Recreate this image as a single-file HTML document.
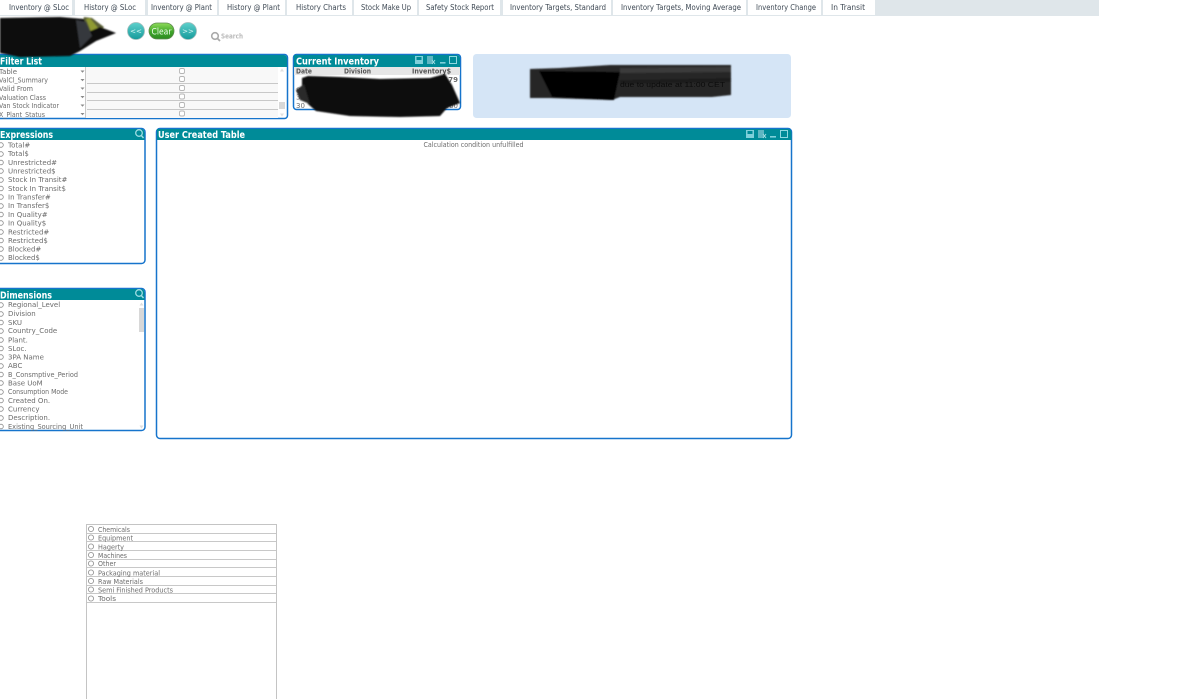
<!DOCTYPE html>
<html lang="en">
<head>
<meta charset="utf-8">
<title>Inventory</title>
<style>
html,body{margin:0;padding:0;background:#fff;width:1193px;height:699px;overflow:hidden}
svg{display:block;font-family:"DejaVu Sans","Liberation Sans",sans-serif}
.tab{font-size:7.5px;fill:#3f4a55}
.li{font-size:7px;fill:#6c6c6c}
.ti{font-size:10px;font-weight:bold;fill:#fff}
.pn{fill:#fff;stroke:#1674cc;stroke-width:1.5}
.hd{fill:#008b98}
.ln{stroke:#c8c8c8;stroke-width:1}
.rd{fill:#fff;stroke:#8a8a8a;stroke-width:.8}
.ic{fill:#7fd0da}
.t{filter:url(#s)}
</style>
</head>
<body>
<svg width="1193" height="699" viewBox="0 0 1193 699" xmlns="http://www.w3.org/2000/svg">
<defs>
<filter id="s" x="-5%" y="-5%" width="110%" height="110%"><feGaussianBlur stdDeviation="0.35"/></filter>
<filter id="b" x="-10%" y="-10%" width="120%" height="120%"><feGaussianBlur stdDeviation="0.8"/></filter>
<linearGradient id="g" x1="0" y1="0" x2="0" y2="1"><stop offset="0" stop-color="#8fdc5a"/><stop offset=".55" stop-color="#3fa52a"/><stop offset="1" stop-color="#2b8a20"/></linearGradient>
<linearGradient id="c" x1="0" y1="0" x2="0" y2="1"><stop offset="0" stop-color="#5fd0cc"/><stop offset="1" stop-color="#159a9a"/></linearGradient>
</defs>

<!-- Tab strip -->
<rect x="0" y="0" width="1099" height="16" fill="#dfe6ea"/>
<g fill="#fff">
<rect x="-1" y="0" width="73" height="15"/><rect x="75" y="0" width="70" height="15"/><rect x="148" y="0" width="69" height="15"/><rect x="219" y="0" width="66" height="15"/><rect x="287" y="0" width="65" height="15"/><rect x="354" y="0" width="63" height="15"/><rect x="419" y="0" width="81" height="15"/><rect x="503" y="0" width="108" height="15"/><rect x="613" y="0" width="133" height="15"/><rect x="748" y="0" width="73" height="15"/><rect x="823" y="0" width="52" height="15"/>
</g>
<g class="tab t">
<text x="9" y="10" textLength="60" lengthAdjust="spacingAndGlyphs">Inventory @ SLoc</text>
<text x="84" y="10" textLength="52" lengthAdjust="spacingAndGlyphs">History @ SLoc</text>
<text x="151" y="10" textLength="61" lengthAdjust="spacingAndGlyphs">Inventory @ Plant</text>
<text x="227" y="10" textLength="53" lengthAdjust="spacingAndGlyphs">History @ Plant</text>
<text x="296" y="10" textLength="50" lengthAdjust="spacingAndGlyphs">History Charts</text>
<text x="361" y="10" textLength="50" lengthAdjust="spacingAndGlyphs">Stock Make Up</text>
<text x="426" y="10" textLength="68" lengthAdjust="spacingAndGlyphs">Safety Stock Report</text>
<text x="510" y="10" textLength="96" lengthAdjust="spacingAndGlyphs">Inventory Targets, Standard</text>
<text x="621" y="10" textLength="120" lengthAdjust="spacingAndGlyphs">Inventory Targets, Moving Average</text>
<text x="756" y="10" textLength="60" lengthAdjust="spacingAndGlyphs">Inventory Change</text>
<text x="831" y="10" textLength="34" lengthAdjust="spacingAndGlyphs">In Transit</text>
</g>

<!-- Buttons -->
<circle cx="136" cy="31" r="8.5" fill="url(#c)" stroke="#9fbcbc" stroke-width=".8"/>
<text class="t" x="136" y="33.5" font-size="7" fill="#d8f6f4" text-anchor="middle">&lt;&lt;</text>
<rect x="149" y="23" width="25" height="16" rx="8" fill="url(#g)" stroke="#5f8a50" stroke-width=".8"/>
<text class="t" x="161.5" y="34.5" font-size="9" fill="#f0fff0" text-anchor="middle" textLength="20" lengthAdjust="spacingAndGlyphs">Clear</text>
<circle cx="188" cy="31" r="8.5" fill="url(#c)" stroke="#9fbcbc" stroke-width=".8"/>
<text class="t" x="188" y="33.5" font-size="7" fill="#d8f6f4" text-anchor="middle">&gt;&gt;</text>
<circle cx="215" cy="36" r="3.3" fill="none" stroke="#aaa" stroke-width="1.6"/>
<path d="M217.500 38.500L220 41" stroke="#aaa" stroke-width="1.8"/>
<text class="t" x="221" y="38.500" font-size="7" font-weight="bold" fill="#bbb" textLength="22" lengthAdjust="spacingAndGlyphs">Search</text>

<!-- Filter List -->
<rect class="pn" x="-4" y="54.500" width="291.500" height="64" rx="3"/>
<path class="hd" d="M-4 55H284a3 3 0 0 1 3 3V67H-4Z"/>
<text class="ti t" x="0" y="64.500" textLength="42" lengthAdjust="spacingAndGlyphs">Filter List</text>
<rect x="85" y="67" width="193" height="51" fill="#f8f8f8"/>
<path class="ln" d="M85.500 67V118M87 83.500H278M87 92.500H278M87 100.500H278M87 109.500H278"/>
<g class="li t" fill="#888">
<text x="-1" y="74" textLength="18" lengthAdjust="spacingAndGlyphs">Table</text>
<text x="-1" y="82.500" textLength="49" lengthAdjust="spacingAndGlyphs">ValCl_Summary</text>
<text x="-1" y="91" textLength="34" lengthAdjust="spacingAndGlyphs">Valid From</text>
<text x="-1" y="100" textLength="47" lengthAdjust="spacingAndGlyphs">Valuation Class</text>
<text x="-1" y="108" textLength="60" lengthAdjust="spacingAndGlyphs">Van Stock Indicator</text>
<text x="-1" y="117" textLength="46" lengthAdjust="spacingAndGlyphs">X_Plant_Status</text>
</g>
<g fill="#8a8a8a">
<path d="M80.500 70.500h4l-2 2.200zM80.500 79h4l-2 2.200zM80.500 87.500h4l-2 2.200zM80.500 96h4l-2 2.200zM80.500 104.500h4l-2 2.200zM80.500 113h4l-2 2.200z"/>
</g>
<g fill="#fff" stroke="#b5b5b5" stroke-width=".9">
<rect x="179.500" y="68.500" width="5" height="5" rx="1.500"/><rect x="179.500" y="76.500" width="5" height="5" rx="1.500"/><rect x="179.500" y="85.500" width="5" height="5" rx="1.500"/><rect x="179.500" y="94" width="5" height="5" rx="1.500"/><rect x="179.500" y="102.500" width="5" height="5" rx="1.500"/><rect x="179.500" y="111" width="5" height="5" rx="1.500"/>
</g>
<rect x="279" y="102" width="6" height="7" fill="#d8d8d8"/>
<path d="M282 68.500l-2 3h4zM282 116.500l-2-3h4z" fill="#e0e0e0"/>

<!-- Top-left scribble (over the panel edge) -->
<g filter="url(#b)">
<polygon points="84,17 92,18 104,27 86,46 76,50" fill="#5c6038"/>
<polygon points="86,19 90,18 98,28 92,34" fill="#8f9a30"/>
<polygon points="0,18 60,17 84,19 88,32 100,27 116,33 96,41 80,51 70,56 20,57 0,53" fill="#0c0c0c"/>
<polygon points="76,20 86,22 92,36 80,48" fill="#34383c"/>
</g>

<!-- Current Inventory -->
<rect class="pn" x="293.500" y="54.500" width="167" height="55" rx="3"/>
<path class="hd" d="M294 55H457a3 3 0 0 1 3 3V67H294Z"/>
<text class="ti t" x="296" y="64.500" textLength="83" lengthAdjust="spacingAndGlyphs">Current Inventory</text>
<rect x="415" y="56" width="8" height="8" class="ic"/><rect x="416.500" y="57" width="5" height="3" fill="#008b98"/>
<rect x="427" y="56" width="6" height="8" fill="#5fb6c2"/><path d="M432 60l3 4M435 60l-3 4" stroke="#9fdce2"/>
<rect x="440" y="62" width="5.500" height="1.600" class="ic"/>
<rect x="449.500" y="56.500" width="7" height="7" fill="none" stroke="#8fd8e0"/>
<rect x="294" y="67" width="166" height="8" fill="#e6e6e6"/>
<g class="t" font-size="7" font-weight="bold" fill="#555">
<text x="296" y="73.500" textLength="16" lengthAdjust="spacingAndGlyphs">Date</text>
<text x="344" y="73.500" textLength="27" lengthAdjust="spacingAndGlyphs">Division</text>
<text x="412" y="73.500" textLength="39" lengthAdjust="spacingAndGlyphs">Inventory$</text>
</g>
<g class="li t" fill="#666">
<text x="296" y="92.500">80</text>
<text x="296" y="99.500">30</text>
<text x="296" y="108">30</text>
<text x="458" y="108" text-anchor="end">060</text>
<text x="458" y="82" text-anchor="end" font-weight="bold">179</text>
</g>
<g filter="url(#b)">
<polygon points="302,78 308,76 340,77 380,79 430,78 445,74 452,85 460,103 447,108 440,116 400,117 350,116 316,111 308,104 302,94" fill="#0b0b0b"/>
<polygon points="296,90 304,84 310,104 300,100" fill="#2a2a2a"/>
</g>

<!-- Info box -->
<rect x="473" y="54" width="318" height="64" rx="3.500" fill="#d5e5f6"/>
<g filter="url(#b)">
<polygon points="530,69 560,68 610,65 731,65 731,95 712,97 620,97 612,100 550,98 530,98" fill="#262626"/>
<polygon points="620,68 731,67 731,72 620,73" fill="#3a3a3a"/>
<polygon points="620,80 731,78 731,82 620,84" fill="#1a1a1a"/>
<polygon points="539,71 620,72 614,100 552,97" fill="#050505"/>
</g>
<text x="620" y="87" font-size="7" fill="#0c0c0c" textLength="105" lengthAdjust="spacingAndGlyphs" font-family="Liberation Sans">due to update at 11:00 CET</text>

<!-- Expressions -->
<rect class="pn" x="-4" y="128.500" width="149" height="135" rx="3.500"/>
<path class="hd" d="M-4 129H141a3.500 3.500 0 0 1 3.500 3.500V140H-4Z"/>
<text class="ti t" x="0" y="138" textLength="53" lengthAdjust="spacingAndGlyphs">Expressions</text>
<circle cx="139" cy="133" r="3.300" fill="none" stroke="#9fdce2" stroke-width="1.300"/><path d="M141.300 135.500L143.500 138" stroke="#9fdce2" stroke-width="1.500"/>
<g class="li t">
<text x="8" y="147.500">Total#</text><text x="8" y="156">Total$</text><text x="8" y="165">Unrestricted#</text><text x="8" y="173.500">Unrestricted$</text><text x="8" y="182">Stock In Transit#</text><text x="8" y="191">Stock In Transit$</text><text x="8" y="199.500">In Transfer#</text><text x="8" y="208">In Transfer$</text><text x="8" y="217">In Quality#</text><text x="8" y="225.500">In Quality$</text><text x="8" y="234.500">Restricted#</text><text x="8" y="243">Restricted$</text><text x="8" y="251.500">Blocked#</text><text x="8" y="260">Blocked$</text>
</g>
<g class="rd">
<circle cx="1" cy="145" r="2.300"/><circle cx="1" cy="154" r="2.300"/><circle cx="1" cy="162.500" r="2.300"/><circle cx="1" cy="171" r="2.300"/><circle cx="1" cy="180" r="2.300"/><circle cx="1" cy="188.500" r="2.300"/><circle cx="1" cy="197" r="2.300"/><circle cx="1" cy="206" r="2.300"/><circle cx="1" cy="214.500" r="2.300"/><circle cx="1" cy="223" r="2.300"/><circle cx="1" cy="232" r="2.300"/><circle cx="1" cy="240.500" r="2.300"/><circle cx="1" cy="249" r="2.300"/><circle cx="1" cy="258" r="2.300"/>
</g>

<!-- Dimensions -->
<rect class="pn" x="-4" y="288.500" width="149" height="142" rx="3.500"/>
<path class="hd" d="M-4 289H141a3.500 3.500 0 0 1 3.500 3.500V300H-4Z"/>
<text class="ti t" x="0" y="298.500" textLength="52" lengthAdjust="spacingAndGlyphs">Dimensions</text>
<circle cx="139" cy="293" r="3.300" fill="none" stroke="#9fdce2" stroke-width="1.300"/><path d="M141.300 295.500L143.500 298" stroke="#9fdce2" stroke-width="1.500"/>
<rect x="139" y="308" width="5" height="24" fill="#d8d8d8"/>
<path d="M141.500 302.500l-2 3h4zM141.500 428.500l-2-3h4z" fill="#dedede"/>
<g class="li t">
<text x="8" y="307">Regional_Level</text><text x="8" y="316">Division</text><text x="8" y="325">SKU</text><text x="8" y="333">Country_Code</text><text x="8" y="342.500">Plant.</text><text x="8" y="351">SLoc.</text><text x="8" y="359.500">3PA Name</text><text x="8" y="368">ABC</text><text x="8" y="377" textLength="70" lengthAdjust="spacingAndGlyphs">B_Consmptive_Period</text><text x="8" y="385.500">Base UoM</text><text x="8" y="394" textLength="60" lengthAdjust="spacingAndGlyphs">Consumption Mode</text><text x="8" y="403">Created On.</text><text x="8" y="411.500">Currency</text><text x="8" y="420">Description.</text><text x="8" y="429" textLength="75" lengthAdjust="spacingAndGlyphs">Existing_Sourcing_Unit</text>
</g>
<g class="rd">
<circle cx="1" cy="305" r="2.300"/><circle cx="1" cy="314" r="2.300"/><circle cx="1" cy="322.500" r="2.300"/><circle cx="1" cy="331" r="2.300"/><circle cx="1" cy="340" r="2.300"/><circle cx="1" cy="348.500" r="2.300"/><circle cx="1" cy="357" r="2.300"/><circle cx="1" cy="366" r="2.300"/><circle cx="1" cy="374.500" r="2.300"/><circle cx="1" cy="383" r="2.300"/><circle cx="1" cy="392" r="2.300"/><circle cx="1" cy="400.500" r="2.300"/><circle cx="1" cy="409" r="2.300"/><circle cx="1" cy="418" r="2.300"/><circle cx="1" cy="426.500" r="2.300"/>
</g>

<!-- User Created Table -->
<rect class="pn" x="156.500" y="128.500" width="635" height="310" rx="3.500"/>
<path class="hd" d="M157 129H788a3.500 3.500 0 0 1 3.500 3.500V140H157Z"/>
<text class="ti t" x="158" y="138" textLength="87" lengthAdjust="spacingAndGlyphs">User Created Table</text>
<rect x="746" y="130" width="8" height="8" class="ic"/><rect x="747.500" y="131" width="5" height="3" fill="#008b98"/>
<rect x="758" y="130" width="6" height="8" fill="#5fb6c2"/><path d="M763 134l3 4M766 134l-3 4" stroke="#9fdce2"/>
<rect x="770" y="136" width="6" height="1.600" class="ic"/>
<rect x="780.500" y="130.500" width="7" height="7" fill="none" stroke="#8fd8e0"/>
<text class="t" x="473.500" y="147" font-size="6.800" fill="#6c6c6c" text-anchor="middle" textLength="100" lengthAdjust="spacingAndGlyphs">Calculation condition unfulfilled</text>

<!-- Bottom list -->
<rect x="86.500" y="524.500" width="190" height="180" fill="#fff" stroke="#c4c4c4"/>
<path class="ln" d="M87 533.500H276M87 541.500H276M87 550.500H276M87 559.500H276M87 567.500H276M87 576.500H276M87 585.500H276M87 593.500H276M87 602.500H276"/>
<g class="li t">
<text x="98" y="532" textLength="32" lengthAdjust="spacingAndGlyphs">Chemicals</text>
<text x="98" y="540.500" textLength="35" lengthAdjust="spacingAndGlyphs">Equipment</text>
<text x="98" y="549.500" textLength="26" lengthAdjust="spacingAndGlyphs">Hagerty</text>
<text x="98" y="558" textLength="29" lengthAdjust="spacingAndGlyphs">Machines</text>
<text x="98" y="566" textLength="18" lengthAdjust="spacingAndGlyphs">Other</text>
<text x="98" y="575.500" textLength="62" lengthAdjust="spacingAndGlyphs">Packaging material</text>
<text x="98" y="584" textLength="45" lengthAdjust="spacingAndGlyphs">Raw Materials</text>
<text x="98" y="592.500" textLength="75" lengthAdjust="spacingAndGlyphs">Semi Finished Products</text>
<text x="98" y="601" textLength="18" lengthAdjust="spacingAndGlyphs">Tools</text>
</g>
<g fill="#fff" stroke="#9a9a9a" stroke-width=".9">
<circle cx="91" cy="529" r="2.600"/><circle cx="91" cy="537.500" r="2.600"/><circle cx="91" cy="546.500" r="2.600"/><circle cx="91" cy="555" r="2.600"/><circle cx="91" cy="563.500" r="2.600"/><circle cx="91" cy="572.500" r="2.600"/><circle cx="91" cy="581" r="2.600"/><circle cx="91" cy="589.500" r="2.600"/><circle cx="91" cy="598.500" r="2.600"/>
</g>
</svg>
</body>
</html>
